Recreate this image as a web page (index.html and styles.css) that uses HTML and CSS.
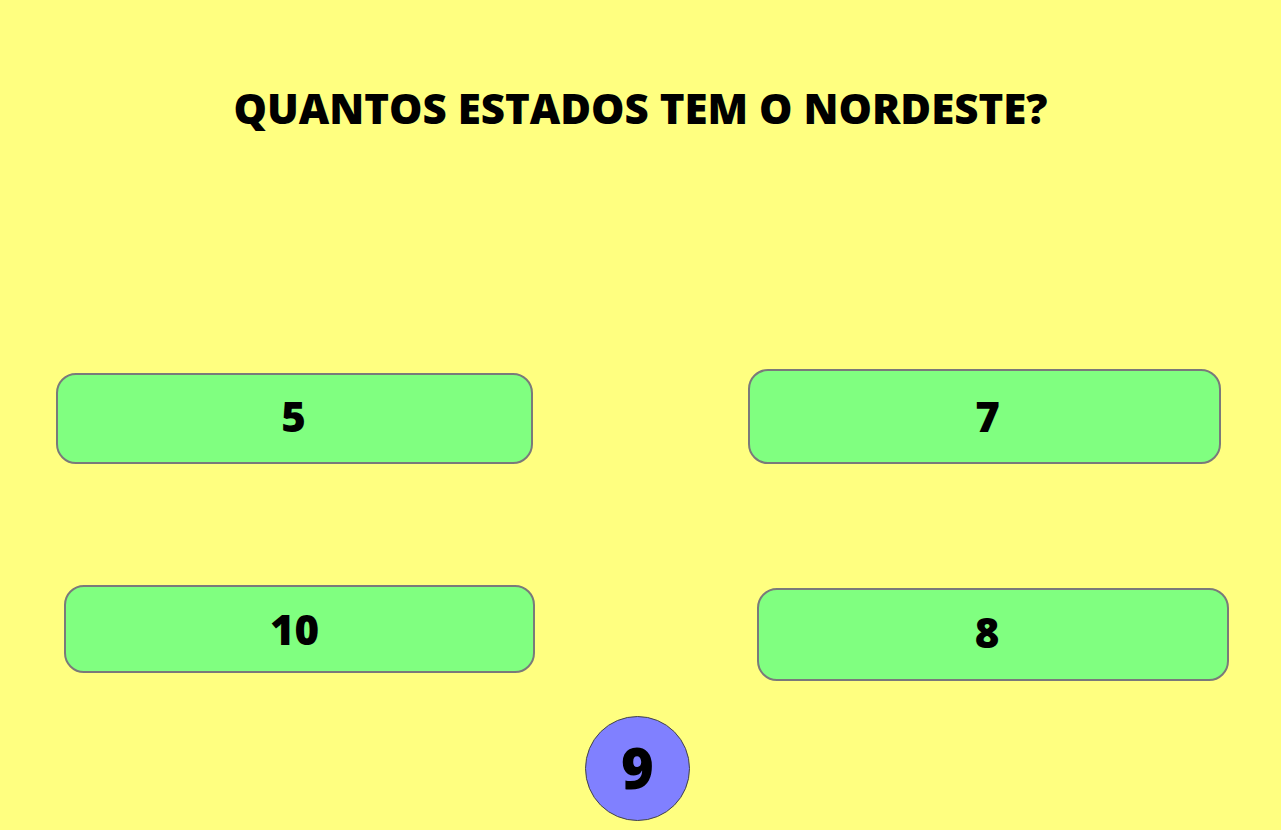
FILE: index.html
```html
<!DOCTYPE html>
<html lang="pt">
<head>
<meta charset="utf-8">
<title>Quiz</title>
<link rel="stylesheet" href="styles.css">
</head>
<body>
<main class="quiz">
  <h1 class="question">QUANTOS ESTADOS TEM O NORDESTE?</h1>
  <div class="row row-top">
    <button class="answer a1">5</button>
    <button class="answer a2">7</button>
  </div>
  <div class="row row-bottom">
    <button class="answer a3">10</button>
    <button class="answer a4">8</button>
  </div>
  <div class="timer-row">
    <div class="timer">9</div>
  </div>
</main>
</body>
</html>
```
FILE: styles.css
```css
html, body {
  margin: 0;
  padding: 0;
  background: #ffff80;
}
body {
  font-family: "Open Sans", "Liberation Sans", sans-serif;
  width: 1281px;
  height: 830px;
  overflow: hidden;
}
.quiz {
  display: flex;
  flex-direction: column;
}
.question {
  margin: 0;
  padding-top: 81px;
  font-size: 42px;
  line-height: 54px;
  font-weight: 800;
  text-align: center;
  color: #000;
  letter-spacing: 0;
}
.row {
  display: flex;
}
.row-top {
  margin-top: 234px;
  align-items: flex-end;
}
.row-bottom {
  margin-top: 121px;
  align-items: flex-start;
}
.answer {
  box-sizing: border-box;
  background: #80ff80;
  border: 2px solid #7a7a7a;
  border-radius: 20px;
  font-family: "Open Sans", "Liberation Sans", sans-serif;
  font-weight: 800;
  font-size: 42px;
  line-height: 1;
  color: #000;
  display: flex;
  align-items: center;
  justify-content: center;
  padding: 0;
}
.a1 { margin-left: 56px; width: 477px; height: 91px; padding: 0 2px 6px 0; }
.a2 { margin-left: 215px; width: 473px; height: 95px; padding: 0 0 2px 6px; }
.a3 { margin-left: 64px; width: 471px; height: 88px; padding: 0 10px 0 0; }
.a4 { margin-left: 222px; margin-top: 3px; width: 472px; height: 93px; padding: 0 12px 6px 0; }
.timer-row {
  display: flex;
  margin-top: 35px;
}
.timer {
  box-sizing: border-box;
  margin-left: 585px;
  width: 105px;
  height: 105px;
  border-radius: 50%;
  background: #8080ff;
  border: 1px solid #444;
  display: flex;
  align-items: center;
  justify-content: center;
  font-weight: 800;
  font-size: 56px;
  line-height: 1;
  color: #000;
  padding-bottom: 4px;
}
```
